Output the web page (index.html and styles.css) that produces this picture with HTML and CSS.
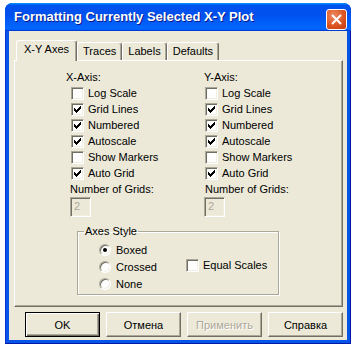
FILE: index.html
```html
<!DOCTYPE html>
<html lang="en">
<head>
    <meta charset="UTF-8">
    <title>Formatting Currently Selected X-Y Plot</title>
    <link rel="stylesheet" href="styles.css">
</head>
<body>
    <div class="window">
        <div class="titlebar">
            <span class="title">Formatting Currently Selected X-Y Plot</span>
            <span class="close">
                <svg width="19" height="19" viewBox="0 0 19 19">
                    <path d="M5 5 L14 14 M14 5 L5 14" stroke="#fff" stroke-width="2" fill="none"/>
                </svg>
            </span>
        </div>
        <div class="body">
            <div class="tabs">
                <div class="tab active">X-Y Axes</div>
                <div class="tab">Traces</div>
                <div class="tab">Labels</div>
                <div class="tab">Defaults</div>
            </div>
            <div class="panel">
                <div class="axes">
                    <div class="axis axis-x">
                        <div class="axis-title">X-Axis:</div>
                        <div class="checks">
                            <div class="check"><span class="box"></span>Log Scale</div>
                            <div class="check"><span class="box on"></span>Grid Lines</div>
                            <div class="check"><span class="box on"></span>Numbered</div>
                            <div class="check"><span class="box on"></span>Autoscale</div>
                            <div class="check"><span class="box"></span>Show Markers</div>
                            <div class="check"><span class="box on"></span>Auto Grid</div>
                        </div>
                        <div class="grids-label">Number of Grids:</div>
                        <div class="num">2</div>
                    </div>
                    <div class="axis axis-y">
                        <div class="axis-title">Y-Axis:</div>
                        <div class="checks">
                            <div class="check"><span class="box"></span>Log Scale</div>
                            <div class="check"><span class="box on"></span>Grid Lines</div>
                            <div class="check"><span class="box on"></span>Numbered</div>
                            <div class="check"><span class="box on"></span>Autoscale</div>
                            <div class="check"><span class="box"></span>Show Markers</div>
                            <div class="check"><span class="box on"></span>Auto Grid</div>
                        </div>
                        <div class="grids-label">Number of Grids:</div>
                        <div class="num">2</div>
                    </div>
                </div>
                <fieldset class="group">
                    <legend>Axes Style</legend>
                    <div class="group-inner">
                        <div class="radios">
                            <div class="radio"><span class="dot on"></span>Boxed</div>
                            <div class="radio"><span class="dot"></span>Crossed</div>
                            <div class="radio"><span class="dot"></span>None</div>
                        </div>
                        <div class="check equal"><span class="box"></span>Equal Scales</div>
                    </div>
                </fieldset>
            </div>
            <div class="buttons">
                <button class="btn default">OK</button>
                <button class="btn">Отмена</button>
                <button class="btn disabled">Применить</button>
                <button class="btn">Справка</button>
            </div>
        </div>
    </div>
</body>
</html>
```

FILE: styles.css
```css
* {
    box-sizing: border-box;
    margin: 0;
    padding: 0;
}

body {
    background-color: #ffffff;
    font-family: "Liberation Sans", Arial, sans-serif;
    font-size: 11px;
    color: #000000;
}

.window {
    width: 346px;
    margin: 3px 0 0 5px;
    padding: 0 4px 4px 4px;
    background-color: #0553e7;
    border-radius: 8px 8px 0 0;
    box-shadow: inset -1px -1px 0 #0019a8, inset 1px 0 0 #0831d9;
}

.titlebar {
    height: 28px;
    margin: 0 -4px;
    padding: 0 4px 0 9px;
    display: flex;
    align-items: flex-start;
    justify-content: space-between;
    border-radius: 7px 7px 0 0;
    background: linear-gradient(180deg, #0997ff, #0053ee 8%, #0050ee 40%, #0066ff 88%, #0066ff 93%, #005bff 95%, #003dd7 96%, #003dd7);
}

.title {
    margin-top: 6px;
    color: #ffffff;
    font-size: 13px;
    font-weight: bold;
    line-height: 16px;
    text-shadow: 1px 1px 0 #0a1a8a;
}

.close {
    width: 21px;
    height: 21px;
    margin-top: 6px;
    border: 1px solid #ffffff;
    border-radius: 3px;
    background: radial-gradient(circle at 35% 30%, #f08a62, #d9521f 60%, #c13b12);
    display: flex;
    align-items: center;
    justify-content: center;
}

.body {
    height: 309px;
    padding: 9px 4px 3px 5px;
    background-color: #ece9d8;
}

/* tabs */
.tabs {
    display: flex;
    align-items: flex-end;
    padding-left: 2px;
    position: relative;
    z-index: 1;
}

.tab {
    height: 18px;
    padding: 2px 5px 0 5px;
    line-height: 13px;
    border-top: 1px solid #ffffff;
    border-left: 1px solid #ffffff;
    border-right: 1px solid #716f64;
    border-radius: 3px 3px 0 0;
    box-shadow: inset -1px 0 0 #aca899;
    background-color: #ece9d8;
}

.tab.active {
    height: 21px;
    margin-bottom: -1px;
    padding: 2px 7px 0 7px;
}

.panel {
    width: 329px;
    height: 247px;
    border-top: 1px solid #ffffff;
    border-left: 1px solid #ffffff;
    border-right: 1px solid #716f64;
    border-bottom: 1px solid #716f64;
    box-shadow: inset -1px -1px 0 #aca899;
}

/* axis columns */
.axes {
    display: flex;
    padding-top: 10px;
}

.axis-x {
    width: 138px;
    margin-left: 51px;
}

.axis-title {
    line-height: 13px;
    margin-bottom: 3px;
}

.checks {
    display: flex;
    flex-direction: column;
    gap: 3px;
}

.axis-x .checks {
    padding-left: 5px;
}

.axis-y .checks {
    padding-left: 1px;
}

.check {
    display: flex;
    align-items: center;
    gap: 4px;
    line-height: 13px;
    white-space: nowrap;
}

.box {
    width: 13px;
    height: 13px;
    flex-shrink: 0;
    background-color: #ffffff;
    border-top: 1px solid #aca899;
    border-left: 1px solid #aca899;
    border-right: 1px solid #ffffff;
    border-bottom: 1px solid #ffffff;
    box-shadow: inset 1px 1px 0 #716f64, inset -1px -1px 0 #f1efe2;
    position: relative;
}

.box.on::after {
    content: "";
    position: absolute;
    left: 2px;
    top: 2px;
    width: 7px;
    height: 7px;
    background: url("data:image/svg+xml;utf8,<svg xmlns='http://www.w3.org/2000/svg' width='7' height='7' shape-rendering='crispEdges'><path d='M0 2h1v3h-1zM1 3h1v3h-1zM2 4h1v3h-1zM3 3h1v3h-1zM4 2h1v3h-1zM5 1h1v3h-1zM6 0h1v3h-1z' fill='black'/></svg>") no-repeat;
}

.grids-label {
    margin-top: 3px;
    line-height: 13px;
}

.axis-x .grids-label,
.axis-x .num {
    margin-left: 4px;
}

.axis-y .grids-label {
    margin-left: 1px;
}

.num {
    width: 21px;
    height: 20px;
    margin-top: 1px;
    padding: 2px 0 0 3px;
    color: #aca899;
    line-height: 13px;
    background-color: #ece9d8;
    border-top: 1px solid #aca899;
    border-left: 1px solid #aca899;
    border-right: 1px solid #ffffff;
    border-bottom: 1px solid #ffffff;
    box-shadow: inset 1px 1px 0 #716f64, inset -1px -1px 0 #f1efe2;
}

/* axes style group */
.group {
    width: 202px;
    margin: 8px 0 0 62px;
    padding: 0;
    min-width: 0;
    border: 1px solid #aca899;
    box-shadow: inset 1px 1px 0 #ffffff, 1px 1px 0 #ffffff;
}

.group legend {
    margin-left: 6px;
    padding: 0 1px;
    line-height: 13px;
}

.group-inner {
    display: flex;
    align-items: flex-start;
    padding: 6px 0 3px 21px;
}

.radios {
    width: 87px;
    display: flex;
    flex-direction: column;
    gap: 4px;
}

.radio {
    display: flex;
    align-items: flex-start;
    gap: 5px;
    line-height: 13px;
}

.dot {
    width: 12px;
    height: 12px;
    flex-shrink: 0;
    border-radius: 50%;
    background-color: #ffffff;
    border: 1px solid;
    border-color: #aca899 #ffffff #ffffff #aca899;
    box-shadow: inset 1px 1px 0 #716f64, inset -1px -1px 0 #f1efe2;
    position: relative;
}

.dot.on::after {
    content: "";
    position: absolute;
    left: 3px;
    top: 3px;
    width: 4px;
    height: 4px;
    border-radius: 50%;
    background-color: #000000;
}

.equal {
    margin-top: 15px;
}

/* bottom buttons */
.buttons {
    display: flex;
    justify-content: flex-end;
    gap: 6px;
    margin-top: 5px;
}

.btn {
    width: 75px;
    height: 25px;
    font-family: "Liberation Sans", Arial, sans-serif;
    font-size: 11px;
    font-weight: normal;
    color: #000000;
    background-color: #ece9d8;
    border-top: 1px solid #ffffff;
    border-left: 1px solid #ffffff;
    border-right: 1px solid #716f64;
    border-bottom: 1px solid #716f64;
    box-shadow: inset -1px -1px 0 #aca899;
}

.btn.default {
    border: 1px solid #000000;
    box-shadow: inset 1px 1px 0 #ffffff, inset -1px -1px 0 #716f64, inset -2px -2px 0 #aca899;
}

.btn.disabled {
    color: #aca899;
    text-shadow: 1px 1px 0 #ffffff;
}
```
